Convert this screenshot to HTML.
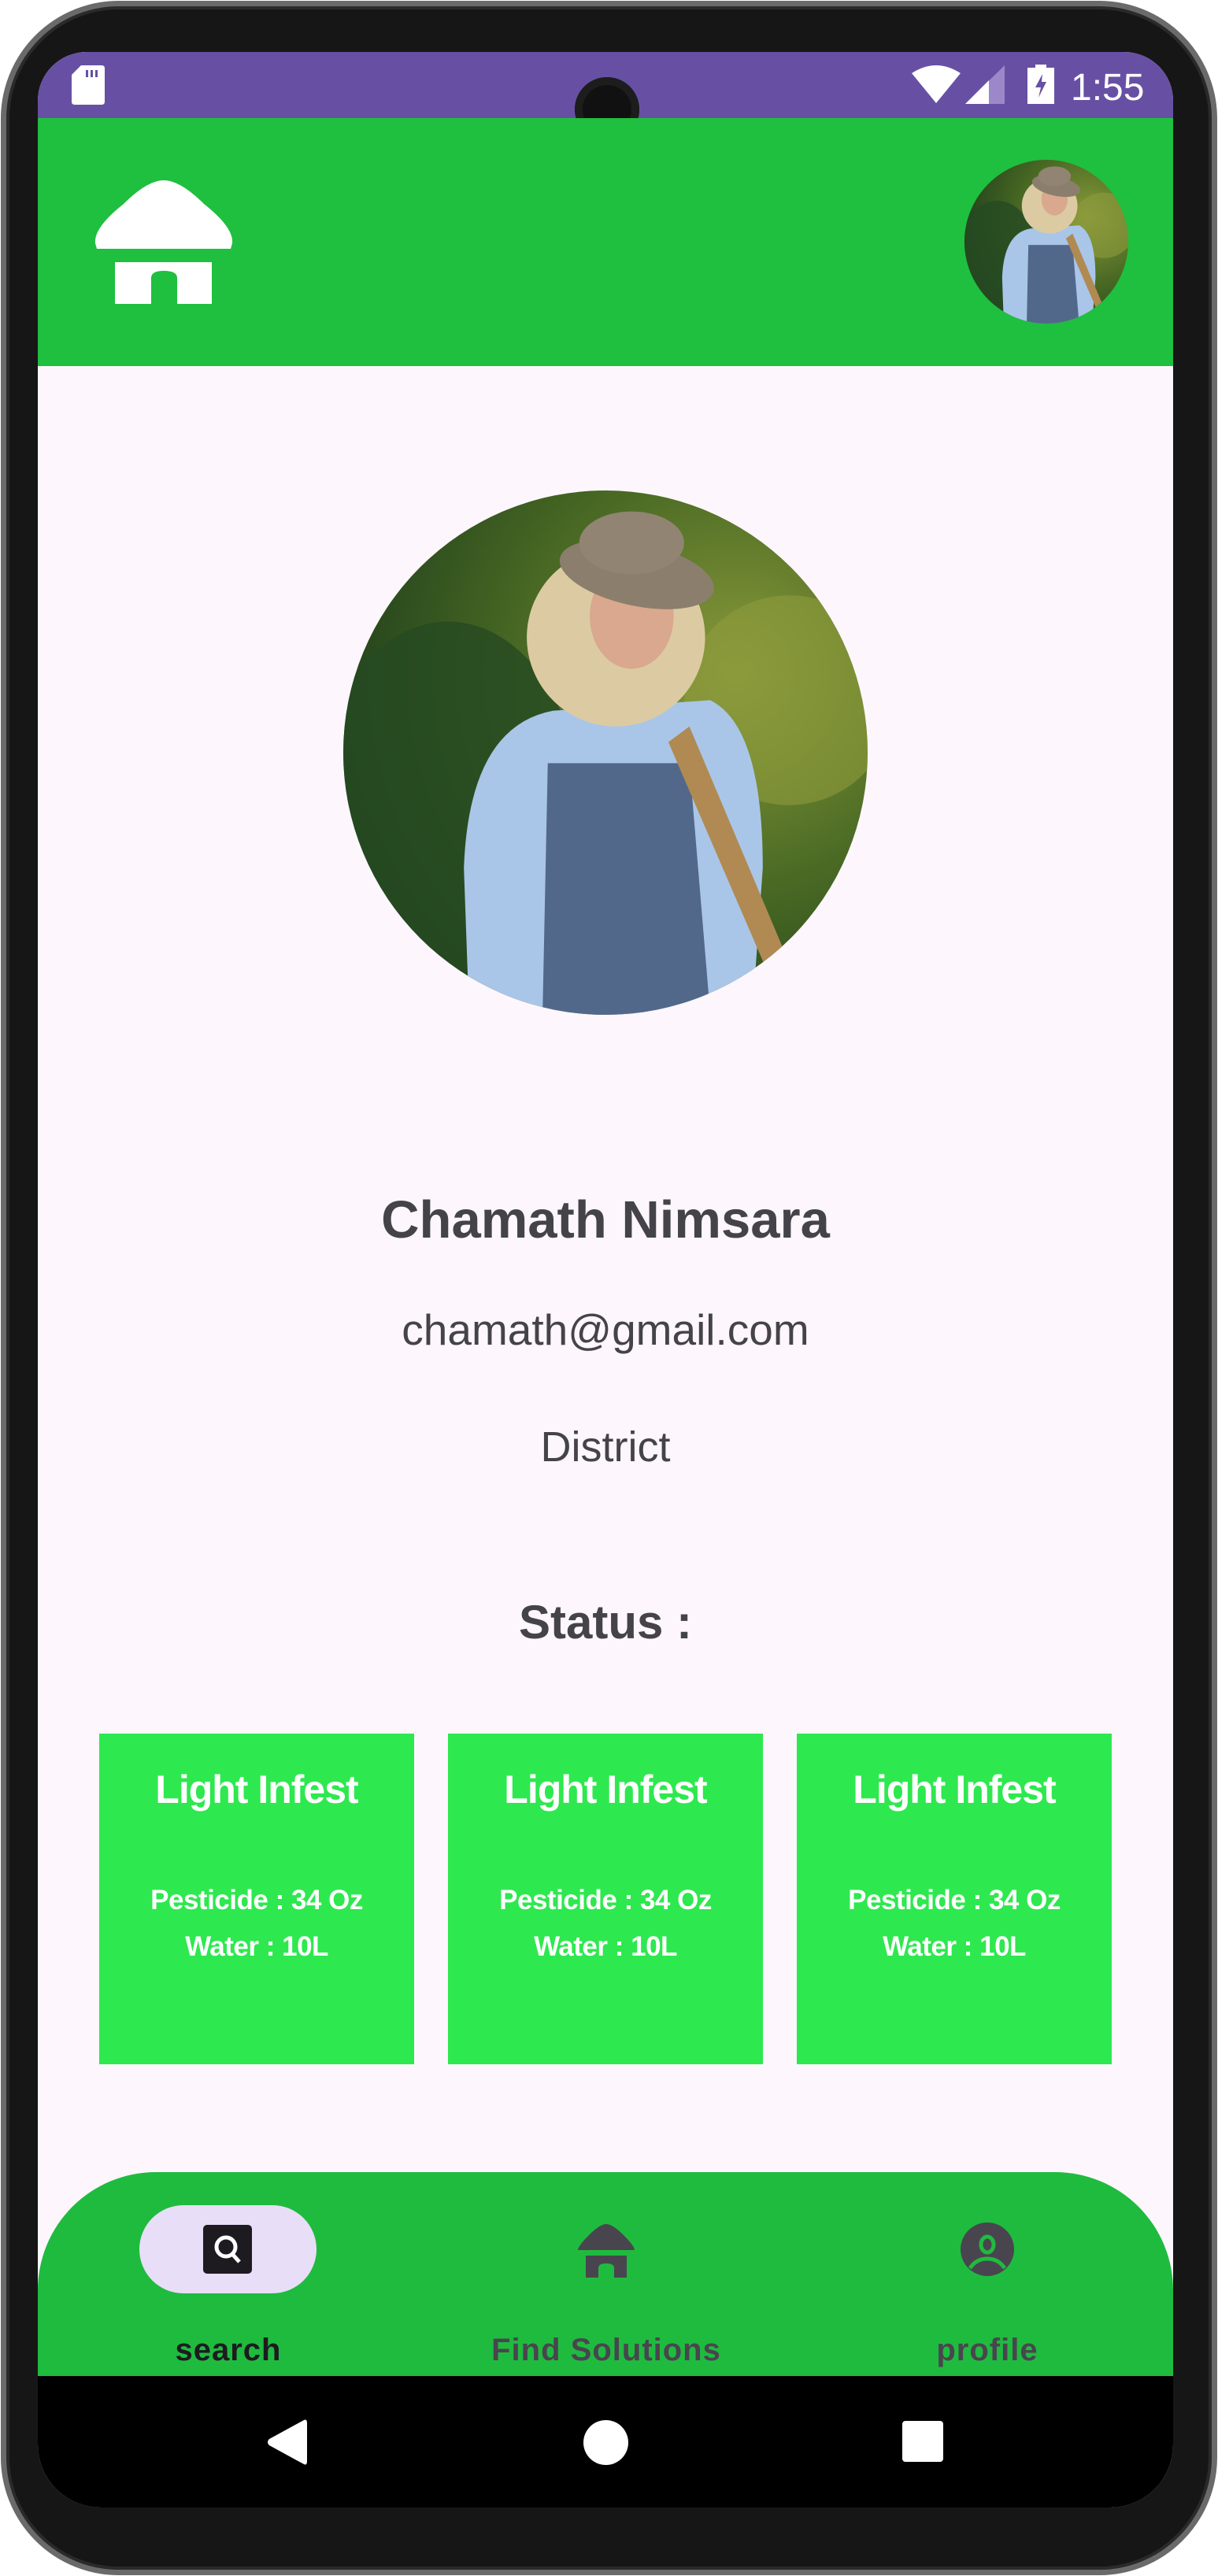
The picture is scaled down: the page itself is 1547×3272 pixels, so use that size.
<!DOCTYPE html>
<html><head><meta charset="utf-8"><style>
*{margin:0;padding:0;box-sizing:border-box}
body{width:1547px;height:3272px;background:#fff;position:relative;overflow:hidden;font-family:"Liberation Sans",sans-serif}
.body{position:absolute;left:1px;top:1px;width:1545px;height:3270px;border-radius:150px;background:#161616;border:7px solid #6a6a6a;box-shadow:inset 0 0 0 4px #2a2a2a}
.screen{position:absolute;left:48px;top:66px;width:1442px;height:3119px;border-radius:62px 62px 80px 80px;overflow:hidden;background:#fdf6fc}
.abs{position:absolute}
.ctext{position:absolute;left:0;width:100%;text-align:center;color:#45434a}
.card{position:absolute;top:2136px;width:400px;height:420px;background:#2ee84f;color:#fff;text-align:center;font-weight:bold}
.card .t{position:absolute;top:42px;width:100%;font-size:50px;letter-spacing:-1px}
.card .p{position:absolute;top:192px;width:100%;font-size:35px;letter-spacing:-0.5px}
.card .w{position:absolute;top:251px;width:100%;font-size:35px;letter-spacing:-0.5px}
.lbl{position:absolute;top:2897px;font-size:40px;font-weight:bold;text-align:center;width:400px;letter-spacing:1px}
</style></head><body>
<svg width="0" height="0" style="position:absolute"><defs>
<clipPath id="cc"><circle cx="50" cy="50" r="50"/></clipPath>
<radialGradient id="bg" cx="0.75" cy="0.35" r="0.8"><stop offset="0" stop-color="#8a9a3a"/><stop offset="0.5" stop-color="#4a6a24"/><stop offset="1" stop-color="#1f3f1c"/></radialGradient>
<g id="pic"><g clip-path="url(#cc)">
<rect width="100" height="100" fill="url(#bg)"/>
<ellipse cx="20" cy="60" rx="25" ry="35" fill="#264a22" opacity="0.8"/>
<ellipse cx="85" cy="40" rx="20" ry="20" fill="#8e9b3c" opacity="0.6"/>
<path d="M24 100 L23 72 Q24 45 40 42 L70 40 Q80 45 80 72 L78 100Z" fill="#a9c6e8"/>
<path d="M38 100 L39 52 L66 52 L70 100Z" fill="#52688a"/>
<path d="M66 45 L85 90 L81 92 L62 48Z" fill="#b08a52"/>
<ellipse cx="52" cy="28" rx="17" ry="17" fill="#dccba2"/>
<ellipse cx="55" cy="24" rx="8" ry="10" fill="#d9a88e"/>
<ellipse cx="56" cy="16" rx="15" ry="6" fill="#8b7e6c" transform="rotate(12 56 16)"/>
<ellipse cx="55" cy="10" rx="10" ry="6" fill="#918472"/>
</g></g>
</defs></svg>
<div class="body"></div>
<div class="screen">
 <div class="abs" style="left:0;top:0;width:1442px;height:84px;background:#6750a4"></div>
 <svg class="abs" style="left:43px;top:17px" width="42" height="50" viewBox="0 0 42 50"><path d="M12 0H38Q42 0 42 4V46Q42 50 38 50H4Q0 50 0 46V12Z" fill="#fff"/><rect x="18" y="6" width="3" height="9" fill="#6750a4"/><rect x="24" y="6" width="3" height="9" fill="#6750a4"/><rect x="30" y="6" width="3" height="9" fill="#6750a4"/></svg>
 <svg class="abs" style="left:1110px;top:17px" width="62" height="48" viewBox="0 0 62 48"><path d="M0 10 Q31 -10 62 10 L31 48Z" fill="#fff"/></svg>
 <svg class="abs" style="left:1178px;top:17px" width="50" height="49" viewBox="0 0 50 49"><path d="M50 0V49H0Z" fill="#9b88c8"/><path d="M30 19V49H0Z" fill="#fff"/></svg>
 <svg class="abs" style="left:1257px;top:16px" width="34" height="50" viewBox="0 0 34 50"><rect x="10" y="0" width="14" height="5" fill="#fff"/><rect x="0" y="4" width="34" height="46" fill="#fff"/><path d="M19 12 L10 29 H17 L14 42 L24 22 H18Z" fill="#6750a4"/></svg>
 <div class="abs" style="left:1312px;top:18px;font-size:48px;color:#fff">1:55</div>
 <div class="abs" style="left:682px;top:32px;width:82px;height:82px;border-radius:50%;background:#111;box-shadow:inset 0 0 0 10px #1d1d1d"></div>
 <div class="abs" style="left:0;top:84px;width:1442px;height:315px;background:#1fbf3f"></div>
 <svg class="abs" style="left:71px;top:163px" width="178" height="158" viewBox="0 0 178 158"><path d="M89 0 Q110 0 140 30 Q178 60 176 80 L174 87 H4 L2 80 Q0 60 38 30 Q68 0 89 0Z" fill="#fff"/><path d="M27 104 H150 V157 H106 V124 Q106 115 89 115 Q73 115 73 124 V157 H27Z" fill="#fff"/></svg>
 <svg class="abs" style="left:1177px;top:137px" width="208" height="208" viewBox="0 0 100 100"><use href="#pic"/></svg>
 <svg class="abs" style="left:388px;top:557px" width="666" height="666" viewBox="0 0 100 100"><use href="#pic"/></svg>
 <div class="ctext" style="top:1445px;font-size:67px;font-weight:bold">Chamath Nimsara</div>
 <div class="ctext" style="top:1591px;font-size:55px">chamath@gmail.com</div>
 <div class="ctext" style="top:1741px;font-size:54px">District</div>
 <div class="ctext" style="top:1960px;font-size:60px;font-weight:bold">Status :</div>
 <div class="card" style="left:78px"><div class="t">Light Infest</div><div class="p">Pesticide : 34 Oz</div><div class="w">Water : 10L</div></div>
 <div class="card" style="left:521px"><div class="t">Light Infest</div><div class="p">Pesticide : 34 Oz</div><div class="w">Water : 10L</div></div>
 <div class="card" style="left:964px"><div class="t">Light Infest</div><div class="p">Pesticide : 34 Oz</div><div class="w">Water : 10L</div></div>
 <div class="abs" style="left:0;top:2693px;width:1442px;height:270px;background:#1fbb3e;border-radius:150px 150px 0 0"></div>
 <div class="abs" style="left:129px;top:2735px;width:225px;height:112px;border-radius:56px;background:#e8def8"></div>
 <svg class="abs" style="left:210px;top:2760px" width="62" height="62" viewBox="0 0 62 62"><rect width="62" height="62" rx="5" fill="#1d1b20"/><circle cx="29" cy="28" r="12" fill="none" stroke="#fff" stroke-width="5"/><path d="M37 37 L46 47" stroke="#fff" stroke-width="5"/></svg>
 <svg class="abs" style="left:686px;top:2759px" width="72" height="68" viewBox="0 0 72 68"><path d="M36 0 Q44 0 58 14 Q72 28 72 33 H0 Q0 28 14 14 Q28 0 36 0Z" fill="#49454f"/><path d="M10 40 H62 V68 H46 V56 Q46 50 36 50 Q26 50 26 56 V68 H10Z" fill="#49454f"/></svg>
 <svg class="abs" style="left:1172px;top:2757px" width="68" height="68" viewBox="0 0 68 68"><circle cx="34" cy="34" r="34" fill="#49454f"/><ellipse cx="34" cy="28" rx="8" ry="10" fill="none" stroke="#1fbb3e" stroke-width="5"/><path d="M12 58 Q20 46 34 46 Q48 46 56 58" fill="none" stroke="#1fbb3e" stroke-width="5"/></svg>
 <div class="lbl" style="left:42px;color:#1d1b20">search</div>
 <div class="lbl" style="left:522px;color:#49454f">Find Solutions</div>
 <div class="lbl" style="left:1006px;color:#49454f">profile</div>
 <div class="abs" style="left:0;top:2952px;width:1442px;height:167px;background:#000"></div>
 <svg class="abs" style="left:290px;top:3006px" width="52" height="60" viewBox="0 0 52 60"><path d="M48 2 Q52 0 52 6 V54 Q52 60 48 58 L4 34 Q0 30 4 26Z" fill="#fff"/></svg>
 <div class="abs" style="left:693px;top:3008px;width:57px;height:57px;border-radius:50%;background:#fff"></div>
 <div class="abs" style="left:1098px;top:3009px;width:52px;height:52px;border-radius:4px;background:#fff"></div>
</div>
</body></html>
